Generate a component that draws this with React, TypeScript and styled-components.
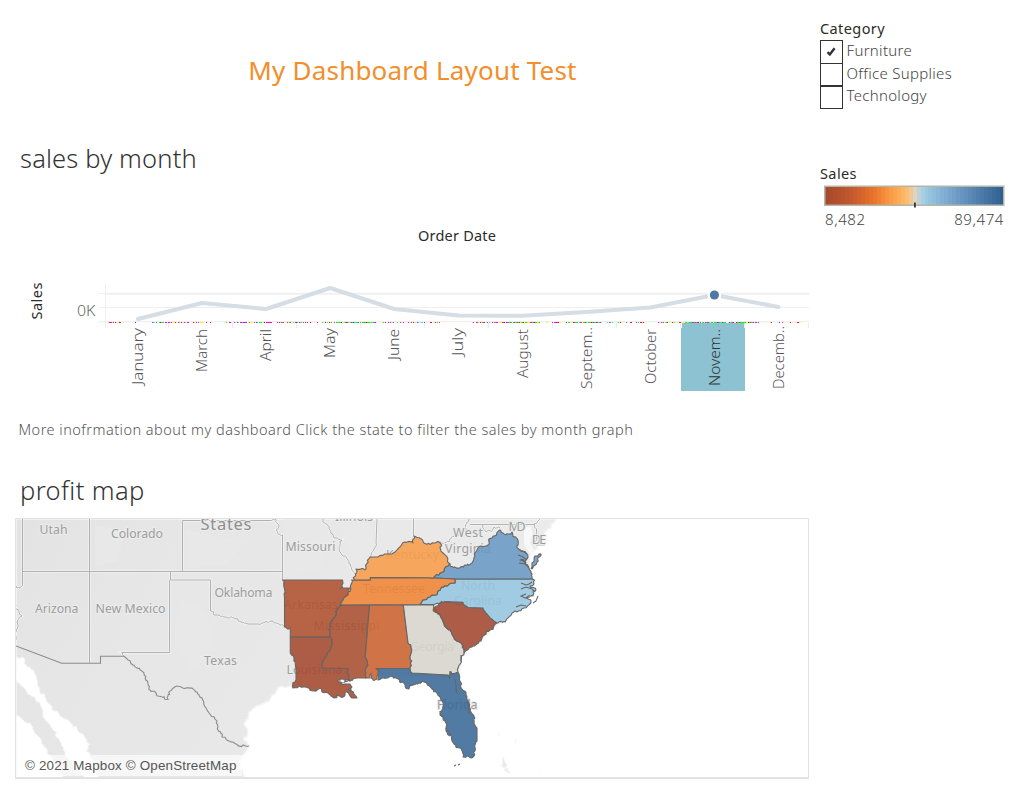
import React from "react";
import styled, { createGlobalStyle } from "styled-components";

const GlobalStyle = createGlobalStyle`
  * { box-sizing: border-box; }
  body { margin: 0; background: #fff; font-family: "Noto Sans", "Open Sans", sans-serif; font-weight: 300; color: #333; }
`;

const Page = styled.div`
  display: grid;
  grid-template-columns: 809px 1fr;
  width: 1024px;
  height: 793px;
  overflow: hidden;
`;

const Main = styled.main`
  display: flex;
  flex-direction: column;
`;

const Title = styled.h1`
  margin: 0;
  height: 141px;
  padding-left: 16px;
  line-height: 140px;
  text-align: center;
  font-size: 26px;
  font-weight: 400;
  letter-spacing: 0.2px;
  color: #f28e2b;
`;

const SheetTitle = styled.h2<{ $height: number; $spacing: number }>`
  margin: 0;
  padding-left: 20px;
  height: ${(p) => p.$height}px;
  line-height: 35px;
  font-size: 25.5px;
  font-weight: 300;
  letter-spacing: ${(p) => p.$spacing}px;
`;

const Chart = styled.svg`
  display: block;
  font-size: 15px;
`;

const AxisTitle = styled.text`
  font-size: 14.5px;
  font-weight: 400;
  fill: #2b2b2b;
`;

const Note = styled.p`
  margin: 0;
  padding-left: 18.5px;
  height: 73px;
  line-height: 58px;
  font-size: 14.5px;
  letter-spacing: 0.48px;
  color: #555;
`;

const MapFrame = styled.section`
  position: relative;
  margin-left: 15px;
  width: 794px;
  height: 261px;
  border: 1px solid #e2e2e2;
  border-bottom-width: 2px;
`;

const MapDrawing = styled.svg`
  display: block;
`;

const Attribution = styled.div`
  position: absolute;
  left: 4px;
  bottom: 1px;
  width: 222px;
  height: 21px;
  padding-left: 5px;
  background: rgba(255, 255, 255, 0.65);
  font: 13.4px/21px "Liberation Sans", Arial, sans-serif;
  letter-spacing: 0.17px;
  color: #555;
  white-space: nowrap;
`;

const Side = styled.aside`
  padding: 18px 0 0 11px;
`;

const SideTitle = styled.h3`
  margin: 0;
  height: 22px;
  line-height: 21px;
  font-size: 14.5px;
  font-weight: 400;
  letter-spacing: 0.4px;
  color: #2b2b2b;
`;

const Filter = styled.section`
  height: 145px;
`;

const Option = styled.label`
  display: flex;
  height: 22.5px;
  gap: 3.5px;
  font-size: 15px;
  line-height: 21px;
  letter-spacing: 0.3px;
  color: #444;
`;

const CheckBox = styled.span`
  display: block;
  width: 23px;
  height: 24px;
  border: 1.5px solid #333;
  flex: none;
`;

const CheckMark = styled.svg`
  display: block;
`;

const Ramp = styled.svg`
  display: block;
  margin-left: 4px;
`;

const RampLabels = styled.div`
  display: flex;
  justify-content: space-between;
  width: 179px;
  margin-left: 5px;
  line-height: 20px;
  font-size: 15px;
  letter-spacing: 0.6px;
  color: #444;
`;

const categories = ["Furniture", "Office Supplies", "Technology"];

const months: { name: string; y: number; start: number; len: number }[] = [
  { name: "January", y: 319, start: 328, len: 57 },
  { name: "March", y: 303, start: 329, len: 43 },
  { name: "April", y: 309, start: 329, len: 32 },
  { name: "May", y: 288, start: 328, len: 30 },
  { name: "June", y: 309, start: 329, len: 31 },
  { name: "July", y: 315.5, start: 328, len: 28 },
  { name: "August", y: 315.8, start: 329, len: 49 },
  { name: "Septem..", y: 312, start: 327, len: 62 },
  { name: "October", y: 307.5, start: 329, len: 55 },
  { name: "Novem..", y: 295, start: 329, len: 57 },
  { name: "Decemb..", y: 307, start: 326, len: 63 },
];
const monthX = (i: number) => 138 + i * 64.05;

const noise = (a: number, b: number) => {
  const v = Math.sin(a * 12.9898 + b * 78.233) * 43758.5453;
  return v - Math.floor(v);
};

const speckColors = ["#ff00ff", "#00ff00", "#ffff00", "#00ffff", "#ff00ff", "#ff00ff", "#ffff00", "#ff0000"];
const speckRuns: [number, number, number][] = [
  [108, 142, 0.5],
  [150, 212, 0.62],
  [222, 274, 0.6],
  [277, 334, 0.55],
  [334, 376, 0.9],
  [382, 442, 0.5],
  [472, 500, 0.45],
  [500, 540, 0.8],
  [545, 562, 0.4],
  [565, 602, 0.95],
  [607, 645, 0.4],
  [658, 685, 0.6],
  [685, 750, 0.85],
  [750, 762, 0.6],
  [770, 808, 0.35],
];
const specks: { x: number; color: string }[] = [];
speckRuns.forEach(([from, to, density]) => {
  for (let x = from; x < to; x += 1) {
    if (noise(x, 3) < density) {
      const green = density > 0.75 && noise(x, 5) < 0.35;
      specks.push({ x, color: green ? "#00ff00" : speckColors[Math.floor(noise(x, 7) * 8)] });
    }
  }
});

const SalesChart = () => (
  <Chart width="809" height="222" viewBox="0 178 809 222">
    <AxisTitle x="418" y="241" textLength="78">Order Date</AxisTitle>
    <AxisTitle transform="translate(41.5 319.5) rotate(-90)" textLength="37">Sales</AxisTitle>
    <text x="77" y="316" textLength="18.5" lengthAdjust="spacingAndGlyphs" fontSize="15" fill="#666">0K</text>
    <path d="M106 293.8H809" stroke="#f0f0f0" strokeWidth="2" />
    <path d="M99 293.5H106M99 307.5H809M99 321.5H809M105.5 284V328" stroke="#efefef" fill="none" />
    {months.map((m, i) => (
      <path key={m.name} d={`M${168.5 + i * 64} 323v5`} stroke="#ececec" />
    ))}
    <path d="M682 323h62v5h1v63h-64v-63h1z" fill="#8cc2d1" />
    <g shapeRendering="crispEdges">
      {specks.map((s) => (
        <rect key={s.x} x={s.x} y="322" width="1" height="1" fill={s.color} />
      ))}
    </g>
    <polyline
      points={months.map((m, i) => `${monthX(i)},${m.y}`).join(" ")}
      fill="none"
      stroke="#d5dde5"
      strokeWidth="4"
      strokeLinecap="round"
      strokeLinejoin="round"
    />
    <circle cx="714.4" cy="295" r="6.8" fill="#fff" />
    <circle cx="714.4" cy="295" r="4.6" fill="#4e79a7" />
    {months.map((m, i) => (
      <text
        key={m.name}
        transform={`translate(${monthX(i) + 5.2} ${m.start + m.len}) rotate(-90)`}
        textLength={m.len}
        lengthAdjust="spacingAndGlyphs"
        fill={i === 9 ? "#333" : "#555"}
      >
        {m.name}
      </text>
    ))}
  </Chart>
);

type Pt = [number, number];
const parse = (s: string): Pt[] => s.split(" ").map((p) => p.split(",").map(Number) as Pt);

/* Short diagonal runs follow rivers and shores, so they get a little wobble;
   it depends on the midpoint only, which keeps shared borders together. */
const split = (a: Pt, b: Pt, depth: number): Pt[] => {
  const dx = b[0] - a[0];
  const dy = b[1] - a[1];
  const len = Math.hypot(dx, dy);
  if (depth === 0 || len < 2.2) return [b];
  const mx = (a[0] + b[0]) / 2;
  const my = (a[1] + b[1]) / 2;
  const k = Math.min(len * 0.55, 3.2);
  const m: Pt = [mx + (noise(mx, my) - 0.5) * k, my + (noise(my, mx) - 0.5) * k];
  return [...split(a, m, depth - 1), ...split(m, b, depth - 1)];
};
const toPath = (s: string, closed = true) => {
  const pts = parse(s);
  const out: Pt[] = [pts[0]];
  const all = closed ? [...pts, pts[0]] : pts;
  for (let i = 1; i < all.length; i++) {
    const a = all[i - 1];
    const b = all[i];
    const dx = Math.abs(b[0] - a[0]);
    const dy = Math.abs(b[1] - a[1]);
    const natural = dx > 0.8 && dy > 0.8 && Math.hypot(dx, dy) < 23;
    out.push(...(natural ? split(a, b, 3) : [b]));
  }
  return "M" + out.map((p) => `${p[0].toFixed(1)} ${p[1].toFixed(1)}`).join("L") + (closed ? "Z" : "");
};

const land =
  "16,519 556,519 551,525 547,531 542,540 538,549 530,556 530,573 534,590 520,606 505,620 495,627 480,640 466,650 461,664 459,675 440,678 400,675 350,678 340,690 314,689 300,686 293,688 281,686 277,690 270,700 256,706 249,716 244,724 248,732 244,738 249,746 243,755 240,768 243,778 16,778";
const gulf =
  "16,656 25,660 27,667 33,670 37,680 40,693 47,702 53,710 63,718 73,727 80,733 88,743 87,752 92,758 100,778 85,778 65,755 61,743 53,730 43,717 40,703 30,695 23,687 16,678";
const pacific = "16,716 22,719 30,723 36,734 42,744 50,755 64,778 16,778";

const states: { id: string; fill: string; points: string }[] = [
  { id: "AR", fill: "rgb(175,80,45)", points: "282.5,580 342.5,580 343,583 340,588 350,588 348,593 343,600 341,606 336,612 334,618 330,624 329,630 330,637 290.3,637 290.3,628 284.5,627 284.5,598" },
  { id: "LA", fill: "rgb(164,73,47)", points: "290.3,637 330,637 331,648 325,657 322,668.5 348,668.5 347,673 350,681 346,680 340,679 338,682 345,684 350,684 352,687 348,690 354,694 357,698 352,698 347,692 343,697 337,695 334,698 328,693 322,692 320,688 314,691 303,687 293,688 296,680 296,672 294,659 290.3,652" },
  { id: "MS", fill: "rgb(169,78,48)", points: "341,605 369.5,605 365.2,657 366,678 356,678 350,681 347,673 348,668.5 322,668.5 325,657 331,648 330,637 329,630 330,624 334,618 336,612" },
  { id: "AL", fill: "rgb(204,99,49)", points: "369.5,605 403.3,605 408,643 411.5,652 410,668.5 376,668.5 378,673 377,679 373,680 371,673 370,678 366,678 365.2,657" },
  { id: "FL", fill: "rgb(57,105,150)", points: "376,668.5 410,668.5 412,673 448,675 449.5,678.5 450,671.5 458,672.5 460,681 467,697 470,710 477,728 477,741 474,756 463,757 460,748 454,744 452,736 446,731 445,721 440,714 443,709 440,697 432,689 424,682 419,683 409,689 403,682 396,678 389,677 378,680 379,673" },
  { id: "GA", fill: "rgb(216,214,205)", points: "403.3,605 433.5,605 434,609 440,615 450,630 461,643 464,652 461,661 458,672.5 450,671.5 449.5,678.5 448,675 412,673 410,668.5 411.5,652 408,643" },
  { id: "SC", fill: "rgb(164,73,48)", points: "433.5,608 445,601.6 463,602.4 468,607.5 483,608 497,623 490,630 481,641 472,647 464,653 461,643 450,630 440,615" },
  { id: "NC", fill: "rgb(150,198,224)", points: "455,579 532.5,579 534,584 530,586 536,590 533,596 526,598 531,601 524,608 515,611 505,622 497,623 483,608 468,607.5 463,602.4 445,601.6 433.5,604.5 420,604.5 423,600 430,597 438,591 447,586 455,583" },
  { id: "VA", fill: "rgb(106,153,196)", points: "430,577.8 440,573 450,564 458,568 465,565 472,563 475,556 481,546 488,545 492,538 500,530 508,534 512,532 518,540 517,547 528,557 526,563 520,560 529,568 531,573 532.5,579 455,579" },
  { id: "VAE", fill: "rgb(106,153,196)", points: "541,554 536,556 532,563 532,569 537,562" },
  { id: "TN", fill: "rgb(239,131,52)", points: "351.6,580 370.3,580 370.3,577.6 430,577.8 455,579 455,583 447,586 438,591 430,597 423,600 420,604.5 341,605 343,600 348,593" },
  { id: "KY", fill: "rgb(247,157,73)", points: "354,580 356,569 365,570 370,557 378,557 385,554 392,554 396,551 402,544 407,542 413,543 414,536 420,538.5 426,544 435,543 440,542 443,553 450,564 440,573 430,577.8 370.3,577.6 370.3,580" },
];

const thinBorders = [
  "22.5,519 22.5,583 20,588 16,586",
  "16,605 22,616 17,622 16,640",
  "89.5,519 89.5,663",
  "22.5,571.5 282.5,571.5",
  "182.5,571.5 182.5,520.5 271.5,520.5 276,519.5 279,526 276,530 282.5,535 282.5,580",
  "170.5,571.5 170.5,580 210.5,580 210.5,611 214,615 219,615 226,617 234,618 241,622 248,624 258,624 267,622 273,621 279,624 284,626.5",
  "169.5,580 169.5,652.5 121.5,652.5 124,656",
  "323,519 330,530 335,538 342,540 339,551 348,560 352,570 355,574",
  "377,519 376,543 370,557",
  "413.5,519 413.5,536",
  "441,543 449,542 456,535 465,531 469,519",
  "470,524.5 534.5,524.5 536,545 545,545",
  "483,525 486,532 494,527 500,528",
  "534,524 548,515",
];

const nationBorder =
  "16,646 61.7,663.3 100.5,663.3 100.5,656.3 124,656.3 133,665 144,673 148,683 150,690 158,696 168,699.5 173,688 180,686.5 192,688 200,697 206,708 217,721 218,730 222,737 233,742 243,745 249,746";

const inlets =
  "M519 550l4 1 4 3M518 555l5 2 4 3M519 563l6 1 4 3M521 583l5 2 3 -1 3 -2M521 589l5 -2 6 2 3 3M526 594l-5 2 4 2 5 -1M516 607l5 -2 5 1M533 603l3 -2 2 -5M455 679l1 6 0 4 1 5M467 703l2 5 0 6M440 715l4 2M446 730l3 1 2 4M454 766l2 -1M458 765l2 -1M531 569l1 -2M461 655l0 6M344 682l4 -1";

const labels: { t: string; x: number; y: number; w: number; size?: number }[] = [
  { t: "Utah", x: 39.5, y: 534, w: 28 },
  { t: "Colorado", x: 111, y: 538, w: 52 },
  { t: "States", x: 200.5, y: 530, w: 51, size: 16.5 },
  { t: "Missouri", x: 285.5, y: 551, w: 50 },
  { t: "Illinois", x: 335, y: 520.8, w: 38 },
  { t: "Oklahoma", x: 214.5, y: 597, w: 58 },
  { t: "Arizona", x: 35, y: 613.3, w: 43.5 },
  { t: "New Mexico", x: 95.5, y: 613.3, w: 70 },
  { t: "Texas", x: 204, y: 665, w: 33 },
  { t: "Arkansas", x: 284, y: 609, w: 54 },
  { t: "Mississippi", x: 313.5, y: 629.5, w: 66 },
  { t: "Louisiana", x: 286.5, y: 674, w: 56 },
  { t: "Tennessee", x: 363, y: 593, w: 62 },
  { t: "Kentucky", x: 386, y: 559, w: 53 },
  { t: "West", x: 453, y: 537, w: 30 },
  { t: "Virginia", x: 445, y: 552.5, w: 46 },
  { t: "MD", x: 508.5, y: 531, w: 17 },
  { t: "DE", x: 532, y: 544, w: 14 },
  { t: "North", x: 461, y: 589.5, w: 34 },
  { t: "Carolina", x: 454, y: 604.5, w: 48 },
  { t: "Georgia", x: 410, y: 651, w: 44 },
  { t: "Florida", x: 437, y: 709, w: 40.5 },
];

const ProfitMap = () => (
  <MapDrawing width="792" height="258" viewBox="16 519 792 258">
    <defs>
      <linearGradient id="relief" x1="0" y1="0" x2="1" y2="0.3">
        <stop offset="0" stopColor="#e3e3e3" />
        <stop offset="0.25" stopColor="#e6e6e6" />
        <stop offset="0.5" stopColor="#e7e7e7" />
        <stop offset="1" stopColor="#ececec" />
      </linearGradient>
    </defs>
    <path d={toPath(land)} fill="url(#relief)" stroke="#f5f5f5" strokeWidth="1.5" />
    <g fill="#eaeaea" opacity="0.6">
      <path d="M285 519h40l8 20-12 30-35 8z" />
      <path d="M340 525l34-3v30l-18 14-10-20z" />
      <path d="M378 520h33l-2 20-26 12z" />
      <path d="M95 525l30 6-8 30-22 6zM185 530l60 12-20 24-40 2z" />
      <path d="M180 600l25 10 10 40-24 20-18-30z" />
    </g>
    <path d={toPath(gulf)} fill="#fff" stroke="#f4f4f4" />
    <path d={toPath(pacific)} fill="#fff" stroke="#f4f4f4" />
    <path d="M524 528l6-2 3 8-3 9 5 9-4 3-7-11z" fill="#f8f8f8" />
    <path d="M503 757l2 5 2 3-2 3-3-1zM507 768l3 6-6-4zM515 743l1-4M498 734l2 1M539 771l1 1" fill="#ebebeb" stroke="#f2f2f2" />
    {thinBorders.map((b) => (
      <path key={b} d={toPath(b, false)} fill="none" stroke="#fff" strokeWidth="2.4" opacity="0.5" />
    ))}
    {thinBorders.map((b) => (
      <path key={b} d={toPath(b, false)} fill="none" stroke="#a9a9a9" strokeWidth="0.9" />
    ))}
    <path d={toPath(nationBorder, false)} fill="none" stroke="#8c8c8c" strokeWidth="1.1" />
    {labels.map((l) => (
      <text
        key={l.t}
        x={l.x}
        y={l.y}
        textLength={l.w}
        fontSize={l.size ?? 12.3}
        fontWeight="400"
        fill={l.size ? "#8e8e8e" : "#9c9c9c"}
        stroke="#ececec"
        strokeWidth="2"
        paintOrder="stroke"
      >
        {l.t}
      </text>
    ))}
    {states.map((s) => (
      <path key={s.id} d={toPath(s.points)} fill={s.fill} fillOpacity="0.88" stroke="#666" strokeWidth="1.1" strokeLinejoin="round" />
    ))}
    <path d="M339 681l3-2 4 2-3 2z" fill="#fff" stroke="#666" strokeWidth="0.7" />
    <path d={inlets} fill="none" stroke="#666" strokeWidth="1.1" />
  </MapDrawing>
);

const rampStops: [number, number[]][] = [
  [0, [165, 72, 46]],
  [0.13, [190, 86, 45]],
  [0.26, [231, 112, 44]],
  [0.38, [252, 160, 73]],
  [0.46, [252, 191, 115]],
  [0.5, [222, 212, 197]],
  [0.55, [160, 206, 228]],
  [0.7, [119, 165, 206]],
  [0.87, [78, 124, 170]],
  [1, [44, 95, 142]],
];
const rampColor = (t: number) => {
  const i = Math.max(1, rampStops.findIndex((s) => s[0] >= t));
  const [t0, a] = rampStops[i - 1];
  const [t1, b] = rampStops[i];
  const k = (t - t0) / (t1 - t0);
  return `rgb(${a.map((v, n) => Math.round(v + (b[n] - v) * k)).join(",")})`;
};

export default function App() {
  return (
    <>
      <GlobalStyle />
      <Page>
        <Main>
          <Title>My Dashboard Layout Test</Title>
          <SheetTitle $height={37} $spacing={0.17}>sales by month</SheetTitle>
          <SalesChart />
          <Note>More inofrmation about my dashboard Click the state to filter the sales by month graph</Note>
          <SheetTitle $height={45} $spacing={0.4}>profit map</SheetTitle>
          <MapFrame>
            <ProfitMap />
            <Attribution>© 2021 Mapbox © OpenStreetMap</Attribution>
          </MapFrame>
        </Main>
        <Side>
          <Filter>
            <SideTitle>Category</SideTitle>
            {categories.map((c, i) => (
              <Option key={c}>
                <CheckBox>
                  {i === 0 && (
                    <CheckMark width="20" height="20" viewBox="0 0 20 20">
                      <path d="M6.5 11.2l2.3 2.2 4.8-6.2" fill="none" stroke="#333" strokeWidth="2.4" />
                    </CheckMark>
                  )}
                </CheckBox>
                {c}
              </Option>
            ))}
          </Filter>
          <SideTitle>Sales</SideTitle>
          <Ramp width="181" height="24" viewBox="0 0 181 24">
            <g shapeRendering="crispEdges">
              {Array.from({ length: 45 }, (_, i) => (
                <rect key={i} x={Math.round(1 + i * 3.98)} y="2" width="4" height="18" fill={rampColor((i + 0.5) / 45)} />
              ))}
            </g>
            <rect x="0.75" y="1.25" width="179" height="19" fill="none" stroke="#b5b5a8" strokeWidth="1.5" />
            <rect x="90" y="17.5" width="1.8" height="5" fill="#333" />
          </Ramp>
          <RampLabels>
            <span>8,482</span>
            <span>89,474</span>
          </RampLabels>
        </Side>
      </Page>
    </>
  );
}
